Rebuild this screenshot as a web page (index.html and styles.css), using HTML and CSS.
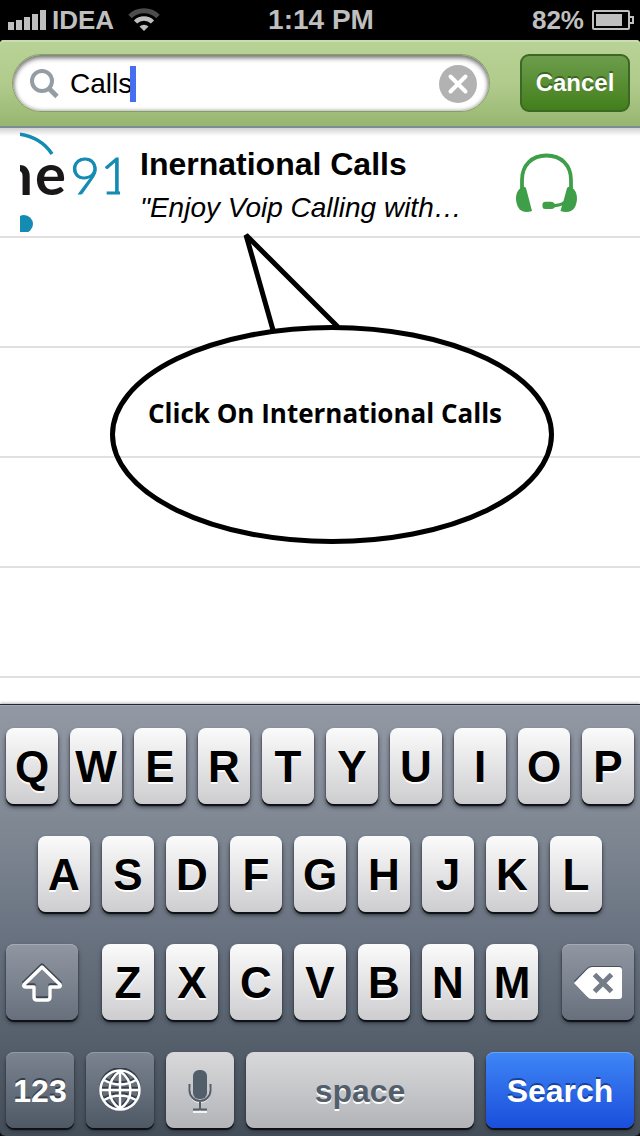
FILE: index.html
```html
<!DOCTYPE html>
<html lang="en">
<head>
<meta charset="utf-8">
<meta name="viewport" content="width=device-width, initial-scale=1">
<title>Search</title>
<link rel="stylesheet" href="styles.css">
</head>
<body>
<div class="screen">
  <header class="status">
    <div class="status-left">
      <svg class="signal" width="38" height="20" viewBox="0 0 38 20" aria-hidden="true">
        <path d="M0 12h6v8H0zM8 10h6v10H8zM16 7h6v13h-6zM24 4h6v16h-6zM32 0h6v20h-6z" fill="#bfbfbf"/>
      </svg>
      <span class="carrier">IDEA</span>
      <svg class="wifi" width="32" height="24" viewBox="0 0 32 24" aria-hidden="true">
        <path d="M2 8.500A20 20 0 0 1 30 8.500" fill="none" stroke="#4c4c4c" stroke-width="5"/>
        <path d="M7.500 14A12 12 0 0 1 24.500 14" fill="none" stroke="#bfbfbf" stroke-width="4.500"/>
        <path d="M11.500 18.500A6.500 6.500 0 0 1 20.500 18.500L16 23z" fill="#bfbfbf"/>
      </svg>
    </div>
    <span class="clock">1:14 PM</span>
    <div class="status-right">
      <span>82%</span>
      <svg width="42" height="20" viewBox="0 0 42 20" aria-hidden="true">
        <rect x="1" y="1" width="36" height="18" rx="1" fill="none" stroke="#bfbfbf" stroke-width="2"/>
        <path d="M4 4h26v12H4z" fill="#bfbfbf"/>
        <path d="M37 7h4v6h-4" fill="none" stroke="#bfbfbf" stroke-width="2"/>
      </svg>
    </div>
  </header>

  <form class="searchbar">
    <div class="field">
      <svg width="30" height="32" viewBox="0 0 30 32" aria-hidden="true">
        <circle cx="12" cy="13" r="10" fill="none" stroke="#949ca4" stroke-width="4"/>
        <path d="M18.500 20l8.500 8.500" stroke="#949ca4" stroke-width="5"/>
      </svg>
      <div class="entry">
        <input class="query" type="text" aria-label="Search" value="Calls">
        <span class="caret"></span>
      </div>
      <button class="clear" type="button" aria-label="Clear">
        <svg width="38" height="38" viewBox="0 0 38 38" aria-hidden="true">
          <circle cx="19" cy="19" r="19" fill="#b2b2b2"/>
          <path d="M11.500 11.500l15 15M26.500 11.500l-15 15" stroke="#fff" stroke-width="4" stroke-linecap="round"/>
        </svg>
      </button>
    </div>
    <button class="cancel" type="button">Cancel</button>
  </form>

  <main class="results">
    <a class="row result" href="#">
      <svg class="logo" width="100" height="100" viewBox="0 0 100 100" role="img" aria-label="Phone91">
        <path d="M-1 2C13 4 25 11 32 22" fill="none" stroke="#138bb2" stroke-width="3.500"/>
        <circle cx="4" cy="92" r="9" fill="#138bb2"/>
        <text class="logo-word" x="13" y="63" text-anchor="end">n</text>
        <text class="logo-word" x="15" y="63">e</text>
        <text class="logo-number" x="50" y="62">91</text>
      </svg>
      <div class="result-text">
        <div class="result-title">Inernational Calls</div>
        <div class="result-sub">"Enjoy Voip Calling with…</div>
      </div>
      <svg class="headset" width="62" height="64" viewBox="0 -2 62 64" aria-hidden="true">
        <path d="M6 37V28C6 13 16 3.500 30.500 3.500S55 13 55 28V37" fill="none" stroke="#3f9f49" stroke-width="3.800"/>
        <path d="M4.500 36Q8 33.500 10 36L16 59C10 61.500 4.500 59.500 2 55C-1 49-1 40 4.500 36z" fill="#3f9f49"/>
        <path d="M56.500 36Q53 33.500 51 36L47.500 49L45.500 50.500C41 52 40 52 38.500 51.800Q37.500 49.700 35 49.700H29.500Q26.500 49.700 26.500 52.500V54.500Q26.500 57 29.500 57H35Q37.500 57 38.500 55.500C41 55 43 54.500 46 53.500L44.500 59C51 61.500 56.500 59.500 59 55C62 49 62 40 56.500 36z" fill="#3f9f49"/>
      </svg>
    </a>
    <div class="row"></div>
    <div class="row"></div>
    <div class="row"></div>
    <div class="row"></div>
    <div class="callout">
      <svg width="444" height="312" viewBox="0 0 444 312" aria-hidden="true">
        <g fill="none" stroke="#000">
          <ellipse cx="222" cy="202.500" rx="219.500" ry="107" stroke-width="5"/>
          <path d="M163 98L136 3L228 95" stroke-width="5" stroke-linejoin="bevel"/>
        </g>
      </svg>
      <p class="callout-text">Click On International Calls</p>
    </div>
  </main>

  <section class="keyboard" aria-label="Keyboard">
    <div class="keys">
      <button class="key">Q</button><button class="key">W</button><button class="key">E</button><button class="key">R</button><button class="key">T</button><button class="key">Y</button><button class="key">U</button><button class="key">I</button><button class="key">O</button><button class="key">P</button>
    </div>
    <div class="keys home">
      <button class="key">A</button><button class="key">S</button><button class="key">D</button><button class="key">F</button><button class="key">G</button><button class="key">H</button><button class="key">J</button><button class="key">K</button><button class="key">L</button>
    </div>
    <div class="keys third">
      <button class="key dark edge" aria-label="Shift">
        <svg width="42" height="40" viewBox="0 0 42 40" aria-hidden="true">
          <path d="M21 2L3 19.500Q2 22 5 22H13V33Q13 35 16 35H26Q29 35 29 33V22H37Q40 22 39 19.500z" fill="none" stroke="#3e4550" stroke-width="3.500" stroke-linejoin="round"/>
          <path d="M21 4L3 21.500Q2 24 5 24H13V34Q13 37 16 37H26Q29 37 29 34V24H37Q40 24 39 21.500z" fill="none" stroke="#fff" stroke-width="3.500" stroke-linejoin="round"/>
        </svg>
      </button>
      <div class="keys letters">
        <button class="key">Z</button><button class="key">X</button><button class="key">C</button><button class="key">V</button><button class="key">B</button><button class="key">N</button><button class="key">M</button>
      </div>
      <button class="key dark edge" aria-label="Delete">
        <svg width="50" height="36" viewBox="0 0 50 36" aria-hidden="true">
          <path d="M1 16L14 3Q16 1 19 1H46Q49 1 49 4V29Q49 32 46 32H19Q16 32 14 30z" fill="#48505b"/>
          <path d="M1 18L14 4.500Q16 2 19 2H46Q49 2 49 5V31Q49 34 46 34H19Q16 34 14 31.500z" fill="#fff"/>
          <path d="M21.500 9.500L38.500 26.500M38.500 9.500L21.500 26.500" stroke="#747c88" stroke-width="5"/>
        </svg>
      </button>
    </div>
    <div class="keys">
      <button class="key deep small side">123</button>
      <button class="key deep side" aria-label="Next keyboard">
        <svg width="42" height="46" viewBox="0 0 42 46" aria-hidden="true">
          <g fill="none" stroke="#343c47" stroke-width="2.500">
            <circle cx="21" cy="20" r="19.500"/>
            <path d="M21 1V39M1 20H41M5 10Q21 19 37 10M5 30Q21 21 37 30M21 1C7 11 7 29 21 39M21 1C35 11 35 29 21 39"/>
          </g>
          <g fill="none" stroke="#fff" stroke-width="2.500">
            <circle cx="21" cy="22" r="19.500"/>
            <path d="M21 3V41M1 22H41M5 12Q21 21 37 12M5 32Q21 23 37 32M21 3C7 13 7 31 21 41M21 3C35 13 35 31 21 41"/>
          </g>
        </svg>
      </button>
      <button class="key gray side" aria-label="Dictation">
        <svg width="24" height="44" viewBox="0 0 24 44" aria-hidden="true">
          <path d="M2 18V22C2 28 6 33 12 33S22 28 22 22V18M12 34V42M5 43H19" fill="none" stroke="#f4f4f5" stroke-width="2"/>
          <rect x="5" y="1" width="14" height="29" rx="6" fill="#535e6b"/>
          <path d="M1.500 15V21C1.500 27 6 32 12 32S22.500 27 22.500 21V15M12 32V40M5 40.500H19" fill="none" stroke="#535e6b" stroke-width="2"/>
        </svg>
      </button>
      <button class="key gray small">space</button>
      <button class="key blue small">Search</button>
    </div>
  </section>
</div>
</body>
</html>
```
FILE: styles.css
```css
* {
  box-sizing: border-box;
}

body {
  margin: 0;
  background: #000;
  font-family: "Liberation Sans", Arial, sans-serif;
}

button {
  border: 0;
  padding: 0;
  font: inherit;
}

svg {
  display: block;
  flex: none;
}

.screen {
  display: flex;
  flex-direction: column;
  min-height: 100vh;
}

/* Status bar */
.status {
  display: grid;
  grid-template-columns: 1fr auto 1fr;
  align-items: center;
  height: 40px;
  padding: 0 6px 0 8px;
  color: #bfbfbf;
  font-size: 26px;
  font-weight: bold;
}

.status-left,
.status-right {
  display: flex;
  align-items: center;
}

.status-left {
  gap: 6px;
}

.carrier {
  margin-right: 8px;
}

.status-right {
  justify-content: flex-end;
  gap: 8px;
}

.clock {
  font-size: 28px;
}

/* Search bar */
.searchbar {
  display: flex;
  gap: 30px;
  padding: 14px 10px 14px 12px;
  border-bottom: 2px solid #7f8b93;
  border-radius: 4px 4px 0 0;
  background: linear-gradient(#b9d295, #b1cb8d 50%, #98b670);
  box-shadow: inset 0 2px #cbdcae;
}

.field {
  display: flex;
  flex: 1;
  align-items: center;
  gap: 10px;
  height: 58px;
  padding: 2px 12px 0 17px;
  border: 1px solid #85a05f;
  border-radius: 29px;
  background: #fff;
  box-shadow: inset 0 3px 5px #777, inset 0 0 4px #999;
}

.entry {
  position: relative;
  flex: 1;
}

.query {
  display: block;
  width: 100%;
  height: 36px;
  padding: 0;
  border: 0;
  outline: 0;
  background: none;
  color: #000;
  font: 28px "Liberation Sans", Arial, sans-serif;
}

.caret {
  position: absolute;
  top: 0;
  left: 60px;
  width: 6px;
  height: 36px;
  background: #456ff0;
}

.clear {
  border-radius: 50%;
  background: none;
}

.cancel {
  width: 110px;
  height: 58px;
  border: 2px solid #3b6824;
  border-radius: 9px;
  background: linear-gradient(#6d9d4c, #598e34 50%, #427f1b);
  color: #fff;
  font-size: 24px;
  font-weight: bold;
  text-shadow: 0 -2px #3a6620;
}

/* Results */
.results {
  position: relative;
  flex: 1;
  background: linear-gradient(#d2d2d2, #fff 8px);
}

.row {
  height: 110px;
  border-bottom: 2px solid #e0e0e0;
}

.result {
  display: flex;
  align-items: center;
  gap: 20px;
  padding: 0 62px 0 20px;
  color: #000;
  text-decoration: none;
}

.logo {
  overflow: hidden;
}

.logo-word {
  fill: #1a1718;
  font: bold 58px Lato, sans-serif;
}

.logo-number {
  fill: #138bb2;
  stroke: #138bb2;
  stroke-width: 1px;
  font: 300 52px Lato, sans-serif;
}

.result-text {
  flex: 1;
  padding-top: 8px;
}

.result-title {
  font-size: 32px;
  font-weight: bold;
  line-height: 44px;
}

.result-sub {
  font-size: 28px;
  font-style: italic;
  line-height: 44px;
}

.callout {
  position: absolute;
  top: 104px;
  left: 110px;
  display: grid;
}

.callout > * {
  grid-area: 1 / 1;
}

.callout-text {
  margin: 0;
  padding: 163px 14px 0 0;
  font: bold 26px/36px "Open Sans", sans-serif;
  text-align: center;
}

/* Keyboard */
.keyboard {
  display: flex;
  flex-direction: column;
  gap: 32px;
  padding: 23px 6px 8px;
  border-top: 1px solid #22262c;
  border-radius: 0 0 6px 6px;
  background: linear-gradient(#9299a5, #7c8490 33%, #6c7583 50%, #56616d 76%, #444e59);
  box-shadow: 0 -1px 3px #b5b5b5, inset 0 1px #a4aab5;
  z-index: 1;
}

.keys {
  display: flex;
  gap: 12px;
}

.home {
  padding: 0 32px;
}

.third {
  gap: 24px;
}

.letters {
  flex: 1;
}

.key {
  display: flex;
  flex: 1 1 0;
  align-items: center;
  justify-content: center;
  min-width: 0;
  height: 76px;
  padding-top: 2px;
  border-radius: 8px;
  background: linear-gradient(#fbfbfb, #cdcdd0);
  box-shadow: 0 2px 1px #0d1014, 0 3px 4px #30363f;
  color: #000;
  font-size: 44px;
  font-weight: bold;
  text-shadow: 0 2px #fff;
}

.small {
  font-size: 32px;
}

.edge {
  flex: 0 0 72px;
}

.side {
  flex: 0 0 68px;
}

.dark {
  background: linear-gradient(#9097a2, #68707d);
  box-shadow: inset 0 1px #a5abb4, 0 2px 1px #0d1014, 0 3px 4px #30363f;
}

.deep {
  background: linear-gradient(#7b8390, #4f5965);
  box-shadow: inset 0 1px #929aa5, 0 2px 1px #0d1014, 0 3px 4px #30363f;
  color: #fff;
  text-shadow: 0 -2px #363e49;
}

.gray {
  background: linear-gradient(#d9d9db, #b3b4b8);
  color: #535e6b;
}

.blue {
  flex: 0 0 148px;
  background: linear-gradient(#3f86f6, #1a4edb);
  box-shadow: inset 0 1px #68a3fa, 0 2px 1px #0d1014, 0 3px 4px #30363f;
  color: #fff;
  text-shadow: 0 -2px #17419a;
}
```
